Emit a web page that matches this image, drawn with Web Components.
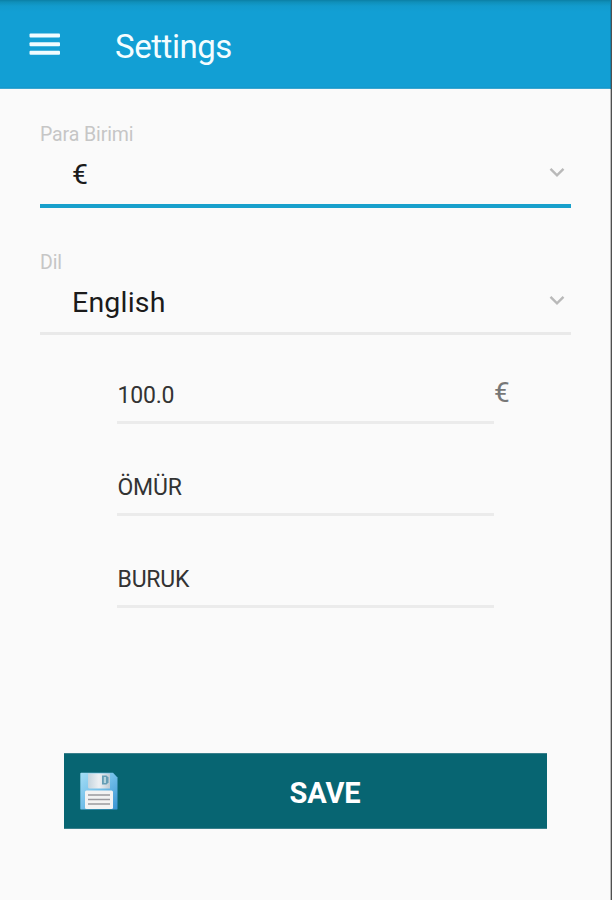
<!DOCTYPE html>
<html lang="en">
<head>
<meta charset="utf-8">
<title>Settings</title>
<style>
html,body{margin:0;height:100%;overflow:hidden;background:#fafafa;font-family:Roboto,"Noto Sans",sans-serif}
</style>
</head>
<body>
<settings-page></settings-page>
<script>
const define = (name, markup) => customElements.define(name, class extends HTMLElement {
  constructor() {
    super();
    const t = document.createElement('template');
    t.innerHTML = markup;
    this.attachShadow({ mode: 'open' }).append(t.content.cloneNode(true));
  }
});

define('menu-icon', `<style>:host{display:block;width:32px;height:24px}svg{display:block}</style>
<svg width="32" height="24" viewBox="0 0 32 24" fill="#effcff"><rect x=".5" y=".5" width="30.5" height="4" rx="1"/><rect x=".5" y="9.2" width="30.5" height="4" rx="1"/><rect x=".5" y="17.800" width="30.5" height="4" rx="1"/></svg>`);

define('app-bar', `<style>
:host{display:flex;align-items:center;box-sizing:border-box;height:89px;padding:3px 0 0 29px;gap:54px;color:#f4fdff;
background:linear-gradient(#0b7fa5 0,#0f8fb9 2px,#129bcd 6px,#129fd4 12px,#129fd4 87px,#1494c6 88px,#5cb8dc 89px);box-shadow:inset -1px 0 #1283ae}
h1{margin:2px 0 0;font-size:33px;line-height:40px;font-weight:400;letter-spacing:-.45px}
menu-icon{margin-top:-3px}
</style><menu-icon></menu-icon><h1><slot></slot></h1>`);

define('chevron-icon', `<style>:host{display:block;width:16px;height:11px}svg{display:block}</style>
<svg width="16" height="11" viewBox="0 0 16 11" fill="none" stroke="#b9b9b9" stroke-width="2.4"><path d="M1.5 1.8 8 8.3 14.5 1.8"/></svg>`);

define('select-field', `<style>
:host{display:block;box-sizing:border-box;width:531px;height:128px;padding-top:8px}
.label{font-size:19.5px;line-height:23px;height:28px;color:#c6c6c6;letter-spacing:-.1px}
.row{display:flex;align-items:center;justify-content:space-between;height:46px;padding:0 6px 0 32px;box-sizing:border-box;font-size:28.5px;letter-spacing:.2px;color:#1b1b1b}
.line{height:3px;margin-top:7px;background:#e9e9e9}
:host([active]) .line{height:3.500px;background:#18a0cc}
chevron-icon{margin-top:-4px}
</style><div class="label"><slot name="label"></slot></div><div class="row"><span><slot></slot></span><chevron-icon></chevron-icon></div><div class="line"></div>`);

define('text-field', `<style>
:host{display:flex;height:92px;align-items:flex-start}
.box{width:377px;height:44px;box-sizing:border-box;padding:2px 0 0 .5px;border-bottom:3px solid #ebebeb;font-size:23px;line-height:28px;letter-spacing:-.2px;color:#333}
.unit{font-size:28px;line-height:26px;color:#777}
</style><div class="box"><slot></slot></div><div class="unit"><slot name="unit"></slot></div>`);

define('floppy-icon', `<style>:host{display:block;width:38px;height:38px}svg{display:block}</style>
<svg width="38" height="38" viewBox="0 0 38 38">
<defs><linearGradient id="b" x1="0" y1="0" x2="1" y2="1"><stop offset="0" stop-color="#a5def5"/><stop offset=".5" stop-color="#71bee9"/><stop offset="1" stop-color="#3893d2"/></linearGradient>
<linearGradient id="m" x1="0" x2="1"><stop offset="0" stop-color="#c4d4de"/><stop offset=".5" stop-color="#edf0f3"/><stop offset="1" stop-color="#bdcbd5"/></linearGradient></defs>
<path d="M1 .7h32l4.5 4.7v31q0 1.2-1.2 1.2H1.5Q.3 37.600.3 36.400V1.400z" fill="url(#b)"/>
<path d="M8 1.500h22v15H9.500Q8 16.500 8 15z" fill="url(#m)"/>
<path d="M22 3.500h4.500l2 2v5l-2 2H22z" fill="#659db5"/><path d="M23.800 5h2.200v6h-2.200z" fill="#b4d4de"/>
<rect x="5" y="18.500" width="28" height="18.500" rx="1.500" fill="#f3f3f3"/>
<path d="M8 23h22M8 27.500h22M8 32h22" stroke="#9a9a9f" stroke-width="1.600"/>
</svg>`);

define('save-button', `<style>
:host{display:block}
button{display:flex;align-items:center;width:483px;height:76px;padding:0 0 0 16px;border:1px solid #397f8b;border-width:1px 0;border-radius:0;background:#076572;color:#fff;font:700 29px/36px Roboto,sans-serif;letter-spacing:-.1px}
span{flex:1;text-align:center;padding:3px 60px 0 0;margin-left:45px}
</style><button><floppy-icon></floppy-icon><span><slot></slot></span></button>`);

define('settings-page', `<style>
:host{display:flex;flex-direction:column;width:612px;height:900px;box-sizing:border-box;border-right:1px solid #505050;background:#fafafa}
main{flex:1;display:flow-root;box-shadow:inset -1px 0 #bdbdbd}
.selects{padding:26px 0 0 40px}
.fields{padding:9px 0 0 117px}
save-button{margin:97px 0 0 64px}
</style>
<app-bar>Settings</app-bar>
<main>
<div class="selects">
<select-field active><span slot="label">Para Birimi</span>€</select-field>
<select-field><span slot="label">Dil</span>English</select-field>
</div>
<div class="fields">
<text-field>100.0<span slot="unit">€</span></text-field>
<text-field>ÖMÜR</text-field>
<text-field>BURUK</text-field>
</div>
<save-button>SAVE</save-button>
</main>`);
</script>
</body>
</html>
